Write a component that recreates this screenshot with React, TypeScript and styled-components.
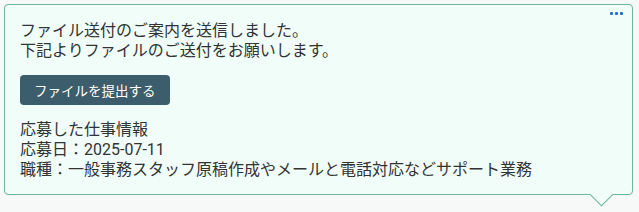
import React from "react";
import styled, { createGlobalStyle } from "styled-components";

const Global = createGlobalStyle`
  html, body { margin: 0; padding: 0; background: #f7f8f8; }
  body { font-family: Roboto, "Noto Sans CJK JP", sans-serif; }
`;

const Page = styled.div`
  padding: 4px 6px 16px 4px;
`;

const Bubble = styled.div`
  position: relative;
  background: #f0fdf8;
  border: 1px solid #6fb3a0;
  border-radius: 4px;
  padding: 16px 15px 14px 15px;
  color: #333;
  font-size: 16px;
  line-height: 20px;
`;

const Tail = styled.div`
  position: absolute;
  right: 22px;
  bottom: -9px;
  width: 16px;
  height: 16px;
  background: #f0fdf8;
  border-right: 1px solid #6fb3a0;
  border-bottom: 1px solid #6fb3a0;
  transform: rotate(45deg);
`;

const More = styled.button`
  position: absolute;
  top: 6px;
  right: 8px;
  border: 0;
  background: transparent;
  padding: 1px;
  display: flex;
  gap: 2px;
  cursor: pointer;
`;

const Dot = styled.span`
  width: 3px;
  height: 3px;
  border-radius: 1px;
  background: #1f6fd1;
`;

const Para = styled.p`
  margin: 0;
`;

const Action = styled.button`
  margin: 14px 0 15px;
  display: inline-flex;
  align-items: center;
  height: 30px;
  padding: 0 14px;
  border: 0;
  border-radius: 4px;
  background: #3c5d6c;
  color: #fff;
  font-family: Roboto, "Noto Sans CJK JP", sans-serif;
  font-size: 13.5px;
  cursor: pointer;
`;

export default function App() {
  return (
    <>
      <Global />
      <Page>
        <Bubble>
          <More aria-label="more">
            <Dot />
            <Dot />
            <Dot />
          </More>
          <Para>
            ファイル送付のご案内を送信しました。
            <br />
            下記よりファイルのご送付をお願いします。
          </Para>
          <Action>ファイルを提出する</Action>
          <Para>
            応募した仕事情報
            <br />
            応募日：2025-07-11
            <br />
            職種：一般事務スタッフ原稿作成やメールと電話対応などサポート業務
          </Para>
          <Tail />
        </Bubble>
      </Page>
    </>
  );
}
